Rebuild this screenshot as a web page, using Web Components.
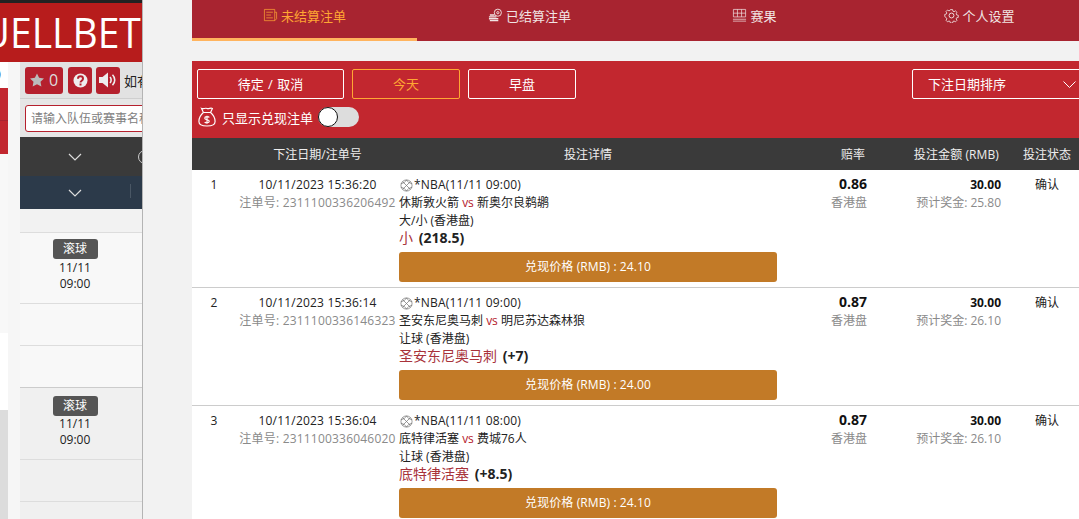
<!DOCTYPE html>
<html lang="zh">
<head>
<meta charset="utf-8">
<title>未结算注单</title>
<style>
  html, body { margin: 0; height: 100%; overflow: hidden; background: #f2f2f2; }
  body { font-family: "Open Sans", "Noto Sans CJK SC", sans-serif; }
  #app { display: flex; width: 1079px; height: 519px; overflow: hidden; }
</style>
</head>
<body>
<div id="app">
  <back-page></back-page>
  <bet-panel>
    <nav-tab active label="未结算注单" icon="list"></nav-tab>
    <nav-tab label="已结算注单" icon="coins"></nav-tab>
    <nav-tab label="赛果" icon="board"></nav-tab>
    <nav-tab label="个人设置" icon="gear"></nav-tab>
    <bet-row slot="rows" no="1" date="10/11/2023 15:36:20" ticket="2311100336206492" league="*NBA(11/11 09:00)"
      home="休斯敦火箭" away="新奥尔良鹈鹕" market="大/小 (香港盘)" pick="小" line="(218.5)" cash="24.10" odds="0.86" win="25.80"></bet-row>
    <bet-row slot="rows" no="2" date="10/11/2023 15:36:14" ticket="2311100336146323" league="*NBA(11/11 09:00)"
      home="圣安东尼奥马刺" away="明尼苏达森林狼" market="让球 (香港盘)" pick="圣安东尼奥马刺" line="(+7)" cash="24.00" odds="0.87" win="26.10"></bet-row>
    <bet-row slot="rows" no="3" date="10/11/2023 15:36:04" ticket="2311100336046020" league="*NBA(11/11 08:00)"
      home="底特律活塞" away="费城76人" market="让球 (香港盘)" pick="底特律活塞" line="(+8.5)" cash="24.10" odds="0.87" win="26.10"></bet-row>
  </bet-panel>
</div>

<script>
// 圖示都放這裡，nav-tab 用 icon 屬性取用
const ICONS = {
  list: '<path opacity=".75" d="M1.500 1.500h11v12h-11zM12.500 4.500h2v7l-2 2M3.500 4.500h7M3.500 7.500h5M3.500 10.500h7" />',
  coins: '<circle cx="10.500" cy="5" r="3.800"/><circle cx="10.500" cy="5" r="1.200"/><path stroke-width="1.500" d="M2 7.500h5M1 9.500h8M1 11.500h10M2 13.500h9"/>',
  board: '<path opacity=".75" d="M1.500 1.500h13v8h-13zM1.500 5.500h13M5.800 1.500v8M10.200 1.500v8M1 12h14M1 14h14"/>',
  gear: '<circle cx="8" cy="8" r="2.600"/><path d="M6.700 1h2.600l.4 1.900 1.300.6 1.700-1 1.800 1.800-1 1.700.6 1.300 1.900.4v2.600l-1.900.4-.6 1.300 1 1.700-1.800 1.800-1.700-1-1.300.6-.4 1.900H6.700l-.4-1.900-1.300-.6-1.700 1-1.800-1.800 1-1.700-.6-1.300L0 9.300V6.700l1.900-.4.6-1.300-1-1.700L3.300 1.500l1.700 1 1.300-.6z" transform="translate(.8 .8) scale(.9)"/>'
};

class BackPage extends HTMLElement {
  constructor() {
    super();
    this.attachShadow({ mode: 'open' });
    const match = (cls) => `
      <div class="match ${cls}">
        <div class="main-row">
          <span class="badge">滚球</span>
          <span>11/11</span>
          <span>09:00</span>
        </div>
        <div class="sub-row"></div>
        <div class="sub-row"></div>
      </div>`;
    this.shadowRoot.innerHTML = `
      <style>
        :host {
          display: block;
          flex: 0 0 142px;
          height: 519px;
          overflow: hidden;
          background: #f6f6f6;
          border-right: 1px solid #b4b4b4;
          margin-right: -1px;
          position: relative;
          z-index: 1;
          color: #222;
          font-size: 12px;
        }
        .top { height: 59px; border-top: 3px solid #222; background: #b71c1c; overflow: hidden; display: flex; justify-content: flex-end; }
        .logo {
          color: #fff;
          font: 42px/58px "Open Sans", sans-serif;
          white-space: nowrap;
          margin-right: 1px;
          transform: scaleX(.93);
          transform-origin: right center;
        }
        .body { display: grid; grid-template-columns: 8px 1fr; column-gap: 12px; }
        .side { background: #fff; height: 457px; position: relative; display: flex; flex-direction: column; overflow: hidden; }
        .side .paren { height: 26px; font-size: 13px; line-height: 22px; margin-left: -3px; }
        .side .red { height: 32px; background: #c2272f; border-bottom: 1px solid #a82430; color: #fff; font-size: 13px; line-height: 30px; overflow: hidden; }
        .side .red + .red { height: 33px; border: 0; }
        .side .pale { height: 179px; background: #f8f8f8; }
        .side .gap { height: 77px; background: #fff; }
        .side .dim { flex: 1; background: #dcdcdc; }
        .main { height: 457px; overflow: hidden; background: #f8f8f8; }
        .tools { height: 37px; box-sizing: border-box; background: #e2e2e2; border-bottom: 1px solid #cfcfcf; display: flex; align-items: center; gap: 4px; padding: 0 0 0 5px; white-space: nowrap; }
        .tbtn { height: 27px; background: #b5202d; border-radius: 3px; display: flex; align-items: center; justify-content: center; color: #ddd; flex: none; }
        .tbtn.star { width: 38px; gap: 5px; font-size: 16px; margin-right: 1px; }
        .tbtn.sq { width: 24px; }
        .notice { font-size: 13px; }
        .search { height: 38px; box-sizing: border-box; background: #e6e6e6; padding: 6px 0 5px 5px; }
        .search div { height: 27px; box-sizing: border-box; border: 1px solid #b5202d; border-radius: 3px 0 0 3px; background: #fff; color: #808080; font-size: 12px; line-height: 25px; padding-left: 5px; white-space: nowrap; width: 140px; }
        .bar { display: flex; align-items: center; position: relative; }
        .bar svg { margin-left: 48px; }
        .bar.dark { height: 39px; background: #3a3a3a; }
        .bar.blue { height: 33px; background: #2c3a4a; }
        .bar.blue i { position: absolute; left: 110px; top: 8px; height: 14px; border-left: 1px solid #4a5765; }
        .bar.dark b { position: absolute; left: 118px; top: 13px; width: 12px; height: 12px; border: 1px solid #ccc; border-radius: 50%; }
        .spacer { height: 23px; background: #f2f2f2; border-bottom: 1px solid #ddd; }
        .match { background: #f8f8f8; }
        .match.alt { background: #f0f0f0; }
        .main-row { height: 70px; padding-right: 12px; display: flex; flex-direction: column; align-items: center; line-height: 16px; }
        .alt .main-row { height: 71px; }
        .match > div { border-bottom: 1px solid #ddd; }
        .sub-row { height: 41px; }
        .badge { background: #555; color: #fff; border-radius: 3px; width: 45px; height: 20px; line-height: 20px; text-align: center; margin: 6px 0 1px; font-size: 12px; }
        .alt .badge { margin: 8px 0 0; }
        .match .sub-row:last-child { border-bottom-color: #ccc; }
      </style>
      <div class="top"><div class="logo">DUELLBET</div></div>
      <div class="body">
        <div class="side">
          <div class="paren">)</div>
          <div class="red"></div>
          <div class="red"></div>
          <div class="pale"></div>
          <div class="gap"></div>
          <div class="dim"></div>
        </div>
        <div class="main">
          <div class="tools">
            <div class="tbtn star">
              <svg width="14" height="14" viewBox="0 0 16 15"><path fill="#bbb" d="M8 0l2.400 5 5.600.7-4 3.800 1 5.500-5-2.700L3 15l1-5.500-4-3.800L5.600 5z"/></svg>
              <span>0</span>
            </div>
            <div class="tbtn sq">
              <svg width="15" height="15" viewBox="0 0 15 15"><circle cx="7.500" cy="7.500" r="7" fill="#eee"/><path fill="none" stroke="#b5202d" stroke-width="2" d="M5 5.800c0-3.300 5-3.300 5 0 0 2-2.500 1.800-2.500 3.700"/><rect x="6.500" y="10.500" width="2" height="2" fill="#b5202d"/></svg>
            </div>
            <div class="tbtn sq">
              <svg width="18" height="16" viewBox="0 0 18 16"><path fill="#eee" d="M0 5h3.500L9 .5v15L3.500 11H0z"/><path fill="none" stroke="#eee" stroke-width="1.600" d="M11 5c1.500 1.500 1.500 4.500 0 6M13.500 2.800c3 3 3 7.400 0 10.400"/></svg>
            </div>
            <span class="notice">如有</span>
          </div>
          <div class="search"><div>请输入队伍或赛事名称</div></div>
          <div class="bar dark">
            <svg width="14" height="8" viewBox="0 0 14 8"><path fill="none" stroke="#ddd" stroke-width="1.200" d="M1 1l6 6 6-6"/></svg>
            <b></b>
          </div>
          <div class="bar blue">
            <svg width="14" height="8" viewBox="0 0 14 8"><path fill="none" stroke="#ddd" stroke-width="1.200" d="M1 1l6 6 6-6"/></svg>
            <i></i>
          </div>
          <div class="spacer"></div>
          ${match('')}
          ${match('alt')}
          ${match('')}
        </div>
      </div>
    `;
  }
}

class NavTab extends HTMLElement {
  constructor() {
    super();
    this.attachShadow({ mode: 'open' });
    const icon = ICONS[this.getAttribute('icon')] || '';
    this.shadowRoot.innerHTML = `
      <style>
        :host {
          display: flex;
          align-items: center;
          justify-content: center;
          gap: 3px;
          flex: 0 0 225px;
          box-sizing: border-box;
          height: 41px;
          padding-bottom: 10px;
          color: #f1e4e4;
          font-size: 13px;
          white-space: nowrap;
        }
        :host([active]) { color: #ffa733; border-bottom: 3px solid #ffb45e; padding-bottom: 7px; }
        svg { fill: none; stroke: currentColor; stroke-width: 1; }
      </style>
      <svg width="15" height="15" viewBox="0 0 16 16">${icon}</svg>
      <span>${this.getAttribute('label')}</span>
    `;
  }
}

class BetPanel extends HTMLElement {
  constructor() {
    super();
    this.attachShadow({ mode: 'open' });
    this.shadowRoot.innerHTML = `
      <style>
        :host {
          display: block;
          flex: 0 0 900px;
          margin-left: 50px;
          height: 519px;
          overflow: hidden;
          background: #fff;
        }
        .nav { display: flex; background: #a82430; }
        .gap { height: 20px; background: #f2f2f2; }
        .filters { height: 77px; box-sizing: border-box; background: #c2272f; padding: 8px 0 0 5px; }
        .line { display: flex; gap: 8px; }
        .btn {
          flex: none;
          box-sizing: border-box;
          height: 30px;
          border: 1px solid #fff;
          border-radius: 2px;
          color: #fff;
          font-size: 13px;
          line-height: 28px;
          text-align: center;
          word-spacing: 1px;
        }
        .btn.pending { width: 147px; }
        .btn.today { width: 108px; color: #ffa733; border-color: #ffa733; }
        .btn.early { width: 108px; }
        .btn.sort {
          width: 180px;
          margin-left: 328px;
          padding: 0 15px;
          display: flex;
          justify-content: space-between;
          align-items: center;
        }
        .cashout { display: flex; align-items: center; margin-top: 5px; height: 26px; color: #fff; font-size: 13px; }
        .cashout svg { margin-left: 1px; }
        .cashout span { margin: 0 5px 0 6px; }
        .switch { width: 41px; height: 20px; border-radius: 10px; background: #ddd; position: relative; }
        .switch::before {
          content: "";
          position: absolute;
          left: 0; top: 0;
          width: 20px; height: 20px;
          box-sizing: border-box;
          border: 1px solid #111;
          border-radius: 50%;
          background: #fff;
        }
        .head {
          display: grid;
          grid-template-columns: 44px 163px 378px 90px 134px 14px 64px;
          height: 32px;
          align-items: center;
          background: #3a3a3a;
          color: #eee;
          font-size: 12px;
          text-align: center;
          white-space: nowrap;
        }
        .r { text-align: right; padding-right: 2px; }
        .wide { letter-spacing: .1px; }
      </style>
      <div class="nav"><slot></slot></div>
      <div class="gap"></div>
      <div class="filters">
        <div class="line">
          <div class="btn pending">待定 / 取消</div>
          <div class="btn today">今天</div>
          <div class="btn early">早盘</div>
          <div class="btn sort">
            <span>下注日期排序</span>
            <svg width="13" height="7" viewBox="0 0 13 7"><path fill="none" stroke="#fff" d="M.5.500l6 6 6-6"/></svg>
          </div>
        </div>
        <div class="cashout">
          <svg width="18" height="20" viewBox="0 0 20 22" fill="none" stroke="#fff" stroke-width="1.300">
            <path d="M6 6L4 1.500c2 1 4-.8 6 0s4-1 6 0L14 6M6 6h8M6 6C2.500 9 1 13 1 16c0 3.500 3 5 9 5s9-1.500 9-5c0-3-1.500-7-5-10"/>
            <path d="M12.500 11.500c-.5-1.200-5-1.500-5 .8 0 2.400 5 1 5 3.400 0 2.300-4.500 2-5 .8M10 9.500v9"/>
          </svg>
          <span>只显示兑现注单</span>
          <div class="switch"></div>
        </div>
      </div>
      <div class="head">
        <div></div>
        <div>下注日期/注单号</div>
        <div>投注详情</div>
        <div class="r">赔率</div>
        <div class="r wide">投注金额 (RMB)</div>
        <div></div>
        <div>投注状态</div>
      </div>
      <slot name="rows"></slot>
    `;
  }
}

class BetRow extends HTMLElement {
  constructor() {
    super();
    this.attachShadow({ mode: 'open' });
    const a = (n) => this.getAttribute(n);
    this.shadowRoot.innerHTML = `
      <style>
        :host {
          display: grid;
          grid-template-columns: 44px 163px 378px 90px 134px 14px 64px;
          height: 118px;
          box-sizing: border-box;
          border-bottom: 1px solid #ccc;
          padding-top: 6px;
          color: #222;
          font-size: 12px;
          line-height: 18px;
          white-space: nowrap;
        }
        .c { text-align: center; }
        .r { text-align: right; }
        .grey { color: #8a8a8a; }
        .date { text-align: center; letter-spacing: .2px; }
        .league { display: flex; align-items: center; gap: 1px; letter-spacing: .2px; }
        .league svg { margin-left: 1px; }
        .vs { color: #b5202d; }
        .pick { font-size: 14px; color: #a8323a; line-height: 18px; margin: -1px 0 1px; }
        .pick b { color: #222; margin-left: 2px; }
        .cash {
          height: 30px;
          margin-top: 5px;
          background: #c27a27;
          border-radius: 3px;
          color: #fff;
          line-height: 30px;
          text-align: center;
          letter-spacing: .1px;
        }
        .odds { font-size: 14px; font-weight: 700; color: #111; margin: -1px 0 1px; }
        .stake { font-weight: 700; color: #111; }
      </style>
      <div class="c">${a('no')}</div>
      <div class="date">
        <div>${a('date')}</div>
        <div class="grey">注单号: ${a('ticket')}</div>
      </div>
      <div>
        <div class="league">
          <svg width="13" height="13" viewBox="0 0 14 14" fill="none" stroke="#777" stroke-width=".8">
            <circle cx="7" cy="7" r="6"/><path d="M2.800 2.800l8.400 8.400M11.200 2.800l-8.400 8.400M7 1c-1 2-3 3.500-6 4M13 9c-3 .5-5 2-6 4M7 1c1 2 3 3.500 6 4M1 9c3 .5 5 2 6 4"/>
          </svg>
          <span>${a('league')}</span>
        </div>
        <div>${a('home')} <span class="vs">vs</span> ${a('away')}</div>
        <div>${a('market')}</div>
        <div class="pick">${a('pick')} <b>${a('line')}</b></div>
        <div class="cash">兑现价格 (RMB) : ${a('cash')}</div>
      </div>
      <div class="r">
        <div class="odds">${a('odds')}</div>
        <div class="grey">香港盘</div>
      </div>
      <div class="r">
        <div class="stake">30.00</div>
        <div class="grey">预计奖金: ${a('win')}</div>
      </div>
      <div></div>
      <div class="c">确认</div>
    `;
  }
}

customElements.define('back-page', BackPage);
customElements.define('nav-tab', NavTab);
customElements.define('bet-panel', BetPanel);
customElements.define('bet-row', BetRow);
</script>
</body>
</html>
